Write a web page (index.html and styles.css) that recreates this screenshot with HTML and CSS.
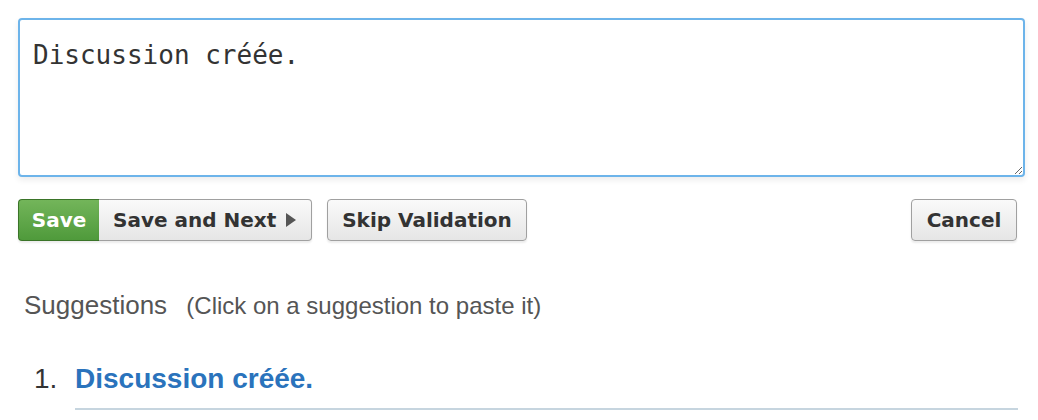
FILE: index.html
```html
<!DOCTYPE html>
<html>
<head>
<meta charset="utf-8">
<link rel="stylesheet" href="styles.css">
</head>
<body>
<div class="page">
  <textarea class="editor">Discussion créée.</textarea>
  <div class="actions">
    <div class="group">
      <button class="btn btn-save">Save</button>
      <button class="btn btn-next">Save and Next <span class="tri"></span></button>
    </div>
    <button class="btn btn-skip">Skip Validation</button>
    <span class="spacer"></span>
    <button class="btn btn-cancel">Cancel</button>
  </div>
  <h2 class="sugg-title">Suggestions <small>(Click on a suggestion to paste it)</small></h2>
  <ol class="sugg-list">
    <li class="sugg-item"><span class="num">1.</span><a class="sugg">Discussion créée.</a></li>
  </ol>
</div>
</body>
</html>
```
FILE: styles.css
```css
html, body { margin: 0; padding: 0; background: #fff; }
.page { padding: 18px 13px 0 18px; }
.editor {
  display: block;
  box-sizing: border-box;
  width: 1007px;
  height: 159px;
  margin: 0;
  padding: 19px 13px;
  border: 2px solid #6db4ea;
  border-radius: 4px;
  box-shadow: 0 3px 6px rgba(0,0,0,0.08);
  font-family: "DejaVu Sans Mono", monospace;
  font-size: 26px;
  line-height: 32px;
  color: #333;
  outline: none;
  resize: vertical;
}
.actions {
  display: flex;
  align-items: center;
  margin-top: 22px;
  width: 999px;
  gap: 15px;
}
.group { display: flex; }
.spacer { flex: 1; }
.btn {
  box-sizing: border-box;
  height: 42px;
  padding: 0 14px;
  font-family: "DejaVu Sans", sans-serif;
  font-weight: bold;
  font-size: 20px;
  color: #333;
  border: 1px solid #a0a0a0;
  border-radius: 4px;
  background: linear-gradient(#fafafa, #e6e6e6);
  box-shadow: 0 2px 2px rgba(0,0,0,0.08);
  display: flex;
  align-items: center;
  gap: 10px;
}
.btn-save {
  width: 81px;
  justify-content: center;
  color: #fff;
  background: linear-gradient(#73b55a, #4f9a3b);
  border-color: #3a7428;
  border-radius: 4px 0 0 4px;
  border-right: none;
}
.btn-next {
  width: 213px;
  border-left: none;
  border-radius: 0 4px 4px 0;
}
.btn-skip { width: 200px; justify-content: center; }
.btn-cancel { width: 106px; justify-content: center; }
.tri {
  width: 0; height: 0;
  border-top: 7px solid transparent;
  border-bottom: 7px solid transparent;
  border-left: 10px solid #555;
}
.sugg-title {
  margin: 49px 0 0 6px;
  font-family: "Liberation Sans", Arial, sans-serif;
  font-weight: normal;
  font-size: 26px;
  line-height: 30px;
  color: #555;
}
.sugg-title small { font-size: 24px; margin-left: 12px; }
.sugg-list {
  list-style: none;
  margin: 42px 0 0 0;
  padding: 0 0 0 16px;
  font-family: "Liberation Sans", Arial, sans-serif;
  font-size: 28px;
  color: #333;
}
.sugg-item { display: flex; }
.num { width: 41px; flex: none; }
.sugg {
  display: block;
  color: #2a73bc;
  font-weight: bold;
  padding-bottom: 13px;
  border-bottom: 2px solid #c6d5df;
  width: 943px;
  cursor: pointer;
}
```
